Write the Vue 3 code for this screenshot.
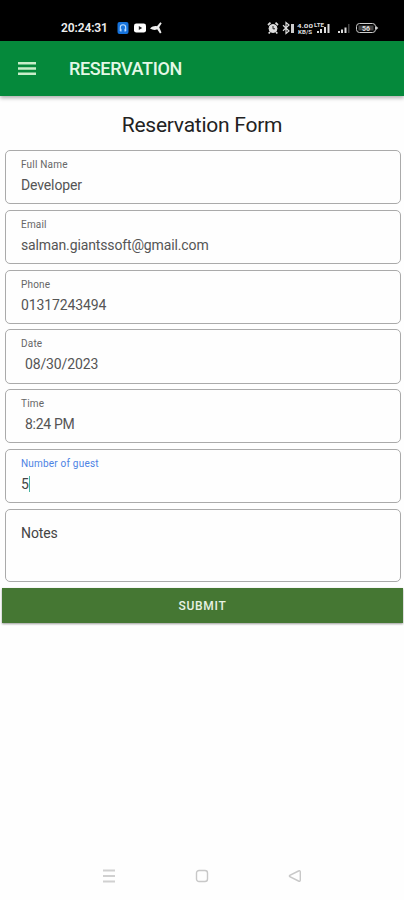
<script setup>
import { ref } from 'vue'

const fields = ref([
  { id: 'name', label: 'Full Name', value: 'Developer' },
  { id: 'email', label: 'Email', value: 'salman.giantssoft@gmail.com' },
  { id: 'phone', label: 'Phone', value: '01317243494' },
  { id: 'date', label: 'Date', value: '08/30/2023' },
  { id: 'time', label: 'Time', value: '8:24 PM' },
  { id: 'guests', label: 'Number of guest', value: '5', active: true },
])
</script>

<template>
  <div class="screen">
    <header class="status">
      <span class="clock">20:24:31</span>
      <svg class="apps" width="46" height="12" viewBox="0 0 46 12">
        <rect x="0.5" y="0" width="11" height="12" rx="2" fill="#1673dc" />
        <path d="M3.300 9V5.500a2.700 2.700 0 0 1 5.400 0V9" fill="none" stroke="#bfe0ff" stroke-width="1.100" />
        <path d="M3.300 6.800h1.200V9.500H3.300zM7.500 6.800h1.200V9.500H7.500z" fill="#bfe0ff" />
        <rect x="17" y="1.500" width="12" height="9" rx="2.300" fill="#fff" />
        <path d="M21.800 4v4l3.400-2z" fill="#222" />
        <path d="M33 6.500C35.500 4 38 3.600 40 4.200L43.300.3l1.400 1-2.500 4 2.300 5.200-1.500 1-2.800-4.200C38 8.300 35.500 8 33 6.500z" fill="#eee" />
      </svg>
      <span class="space"></span>
      <svg class="signals" width="112" height="14" viewBox="0 0 112 14">
        <g fill="none" stroke="#ddd">
          <circle cx="6" cy="7.500" r="4" fill="#ddd" />
          <path d="M1 4l2.500-2.300M8.500 1.700L11 4M3 11l-1.300 1.500M9 11l1.300 1.500" stroke-width="1.700" />
          <path d="M6 5v2.800h2" stroke="#222" />
          <path d="M16 4.300l6 5.700-3 2.500v-11l3 2.500-6 5.700" stroke-width="1.200" />
        </g>
        <path d="M24 3h3v9h-3z" fill="#ccc" />
        <g class="tiny">
          <text x="30" y="7" textLength="16" lengthAdjust="spacingAndGlyphs">4.00</text>
          <text x="31" y="12.500" textLength="14" lengthAdjust="spacingAndGlyphs">KB/S</text>
          <text x="47" y="6" textLength="10" lengthAdjust="spacingAndGlyphs">LTE</text>
        </g>
        <path d="M50 10h2v2h-2zM53 8h2v4h-2zM57 6h2v6h-2zM60.500 3h2V12h-2zM71 10h2v2h-2zM74 8.500h2V12h-2zM77.500 6.500h2V12h-2z" fill="#ddd" />
        <path d="M81 3h1.500v9H81z" fill="#444" />
        <rect x="89.500" y="2.500" width="19" height="9" rx="3" fill="none" stroke="#ccc" />
        <path d="M91.500 4.500h15v5h-15z" fill="#444" />
        <path d="M109 5l2.300 2-2.300 2z" fill="#ccc" />
        <text class="charge" x="95" y="9.600">56</text>
      </svg>
    </header>

    <div class="appbar">
      <svg class="menu" width="18" height="13" viewBox="0 0 18 13">
        <path d="M0 1.200h18M0 6.500h18M0 11.800h18" stroke="#c8eec9" stroke-width="2.400" />
      </svg>
      <span class="page-name">RESERVATION</span>
    </div>

    <main class="content">
      <h1>Reservation Form</h1>
      <div class="form">
        <div v-for="field in fields" :key="field.id" class="field" :class="[field.id, { active: field.active }]">
          <label>{{ field.label }}</label>
          <div class="value"><span>{{ field.value }}</span><i v-if="field.active" class="caret"></i></div>
        </div>
        <div class="field notes">Notes</div>
      </div>
      <button class="submit" type="button">SUBMIT</button>
    </main>

    <nav class="navbar">
      <svg width="14" height="14" viewBox="0 0 14 14">
        <path d="M1 1.500h12M1 7h12M1 12.500h12" stroke="#d0d0d0" stroke-width="2" />
      </svg>
      <svg width="14" height="14" viewBox="0 0 14 14">
        <rect x="1.500" y="1.500" width="11" height="11" rx="2.500" fill="none" stroke="#c8c8c8" stroke-width="1.400" />
      </svg>
      <svg width="14" height="14" viewBox="0 0 14 14">
        <path d="M1.800 6.300Q1 7 1.800 7.700L10.500 12Q12.300 12.700 12.300 11V3Q12.300 1.300 10.500 2z" fill="none" stroke="#c8c8c8" stroke-width="1.400" />
      </svg>
    </nav>
  </div>
</template>

<style>
body {
  background: #fefefe;
}
</style>

<style scoped>
.screen {
  display: flex;
  flex-direction: column;
  height: 900px;
  box-sizing: border-box;
  overflow: hidden;
  background: #fefefe;
  color: #333;
  font-family: Roboto, sans-serif;
}
.status {
  display: flex;
  align-items: center;
  flex: none;
  height: 41px;
  box-sizing: border-box;
  padding: 14px 25px 0 61px;
  background: #000;
}
.clock {
  width: 56px;
  color: #eee;
  font-size: 12px;
  font-weight: 600;
  letter-spacing: -0.1px;
  white-space: nowrap;
}
.space {
  flex: 1;
}
.tiny {
  fill: #ddd;
  font-size: 6px;
  font-weight: 700;
}
.charge {
  fill: #ddd;
  font-size: 7px;
  font-weight: 700;
}
.appbar {
  display: flex;
  align-items: center;
  flex: none;
  height: 55px;
  box-sizing: border-box;
  padding-left: 18px;
  background: #05893b;
  box-shadow: 0 2px 4px rgba(0, 0, 0, 0.32);
}
.page-name {
  margin-left: 33px;
  padding-bottom: 1px;
  color: #e4f8e6;
  font-size: 18px;
  font-weight: 500;
  letter-spacing: -0.35px;
}
.content {
  flex: 1;
}
h1 {
  margin: 0;
  height: 54px;
  padding-top: 1px;
  color: #222;
  font-size: 21px;
  font-weight: 400;
  line-height: 56px;
  letter-spacing: -0.25px;
  text-align: center;
  box-sizing: border-box;
}
.form {
  display: grid;
  grid-template-rows: repeat(6, 54.200px) 73px;
  row-gap: 5.600px;
  padding: 0 3px 0 5px;
}
.field {
  box-sizing: border-box;
  padding: 8px 15px 0;
  border: 1px solid #aaa;
  border-radius: 5px;
}
.field label {
  display: block;
  color: #666;
  font-size: 10px;
  line-height: 12px;
  letter-spacing: 0.2px;
}
.value {
  display: flex;
  align-items: center;
  height: 18px;
  margin-top: 5px;
  color: #555;
  font-size: 14px;
  letter-spacing: -0.130px;
}
.date .value,
.time .value {
  padding-left: 4px;
}
.time .value {
  letter-spacing: -0.300px;
}
.active label {
  color: #4d83e4;
}
.active .value {
  color: #444;
}
.caret {
  width: 1px;
  height: 16px;
  background: #48b5a0;
}
.notes {
  padding-top: 13px;
  color: #444;
  font-size: 14px;
  line-height: 20px;
  letter-spacing: -0.100px;
}
.submit {
  display: block;
  width: calc(100% - 3px);
  height: 35px;
  margin: 6px 1px 0 2px;
  padding: 1px 0 0;
  border: 0;
  background: #457733;
  box-shadow: 0 1px 2px rgba(0, 0, 0, 0.4);
  color: #e8f2e4;
  font: 500 12px Roboto, sans-serif;
  letter-spacing: 0.700px;
}
.navbar {
  display: flex;
  justify-content: space-between;
  flex: none;
  height: 31px;
  padding: 0 102px;
}
</style>
